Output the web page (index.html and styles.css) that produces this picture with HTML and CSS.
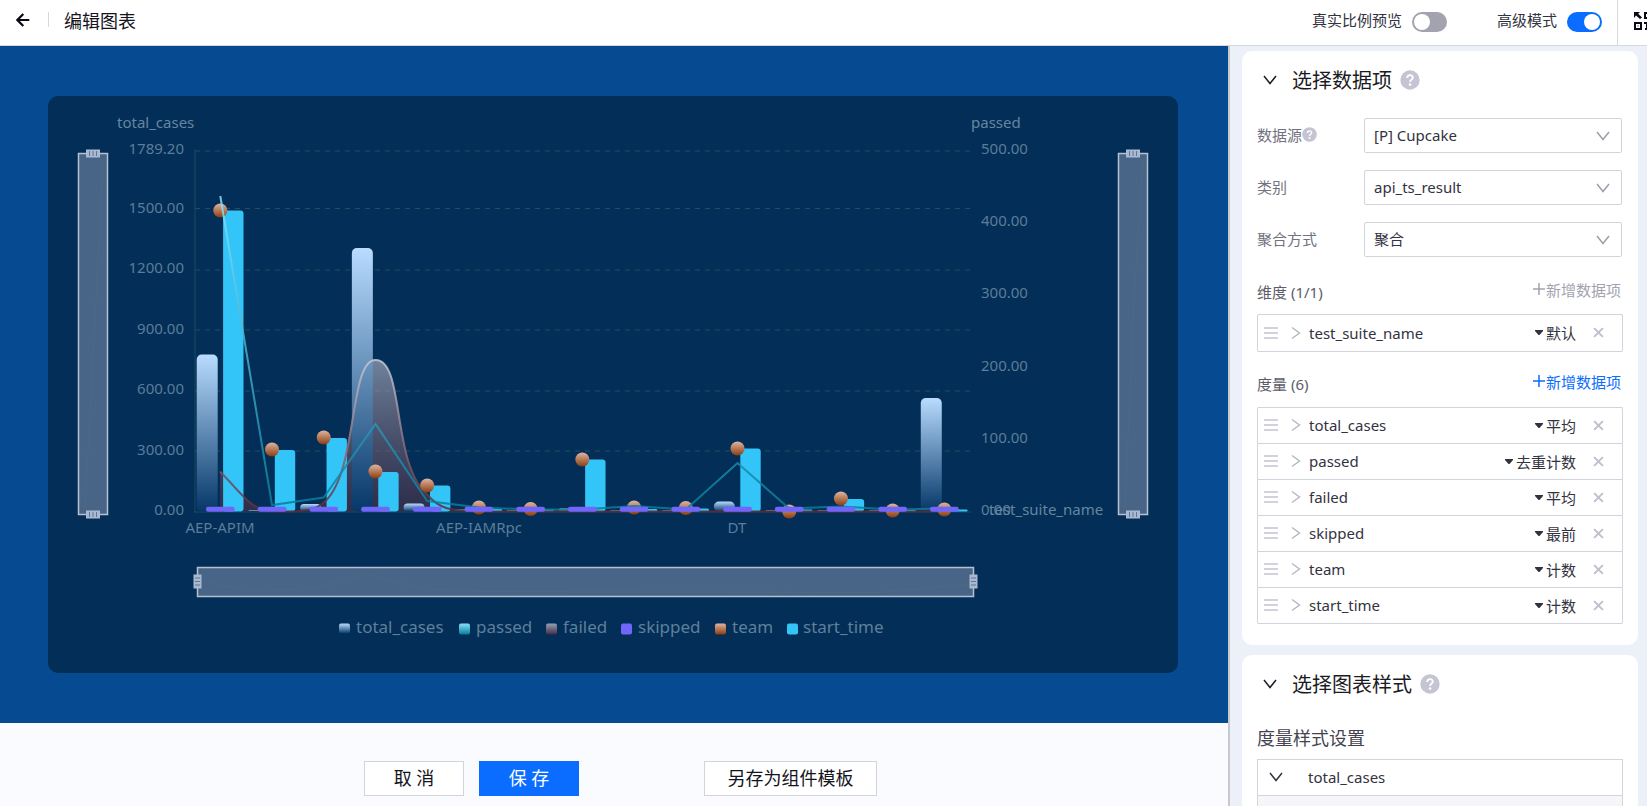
FILE: index.html
```html
<!DOCTYPE html>
<html lang="zh-CN">
<head>
<meta charset="utf-8">
<title>编辑图表</title>
<link rel="stylesheet" href="styles.css">
</head>
<body>
<svg class="defs" aria-hidden="true">
  <symbol id="i-down" viewBox="0 0 14 10"><path d="M1 1l6 7.500 6-7.500" fill="none" stroke="currentColor" stroke-width="1.500"/></symbol>
  <symbol id="i-right" viewBox="0 0 10 14"><path d="M1 1.500l7.500 5.500L1 12.500" fill="none" stroke="currentColor" stroke-width="1.400"/></symbol>
  <symbol id="i-drag" viewBox="0 0 14 12"><path d="M0 1h14M0 6h14M0 11h14" stroke="currentColor" stroke-width="1.500"/></symbol>
  <symbol id="i-close" viewBox="0 0 10 10"><path d="M1 1l8 8M9 1l-8 8" stroke="currentColor" stroke-width="1.800"/></symbol>
  <symbol id="i-caret" viewBox="0 0 8 5"><path d="M0 0h8v1L4.500 5h-1L0 1z" fill="currentColor"/></symbol>
  <symbol id="i-plus" viewBox="0 0 12 12"><path d="M6 0v12M0 6h12" stroke="currentColor" stroke-width="1.500"/></symbol>
  <symbol id="i-help" viewBox="0 0 20 20"><circle cx="10" cy="10" r="9.700" fill="#c4c4d2"/><path d="M7.200 8c0-3.800 5.600-3.700 5.600-.4 0 2-2.700 2.100-2.700 4.300" fill="none" stroke="#fff" stroke-width="1.900"/><circle cx="10.100" cy="14.600" r="1.300" fill="#fff"/></symbol>
</svg>

<header class="topbar">
  <button class="back" aria-label="返回"><svg width="14" height="14" viewBox="0 0 14 14"><path d="M7.300.9L1.400 7l5.900 6.100M1.600 7H13.300" fill="none" stroke="#0a0a14" stroke-width="2.200"/></svg></button>
  <h1>编辑图表</h1>
  <div class="switches">
    <label class="switch">真实比例预览<input type="checkbox" role="switch"></label>
    <label class="switch">高级模式<input type="checkbox" role="switch" checked></label>
  </div>
  <button class="qr" aria-label="二维码"><svg width="18" height="18" viewBox="0 0 18 18" fill="none" stroke="#0a0a14" stroke-width="2"><path d="M0 0h6L4.200 1.800 8 5.600 6 7 2 3.600 0 6z" fill="#0a0a14" stroke="none"/><path d="M11 1h6v5h-6zM1 11h6v6H1z"/><path d="M3.500 13.500h1v1h-1z" stroke="none" fill="#0a0a14"/><path d="M10 11h3v4h4M11 17h3"/></svg></button>
</header>

<div class="body">
  <main class="editor">
    <div class="stage">
      <div class="chart-card">
        <svg class="chart" viewBox="48 96 1130 576" role="img" aria-label="total_cases chart">
          <defs>
            <linearGradient id="gBar" x1="0" y1="0" x2="0" y2="1"><stop offset="0" stop-color="#b9dcff"/><stop offset="1" stop-color="#053768"/></linearGradient>
            <linearGradient id="gLine" gradientUnits="userSpaceOnUse" x1="0" y1="195" x2="0" y2="510"><stop offset="0" stop-color="#86e2fb"/><stop offset="1" stop-color="#067c9b"/></linearGradient>
            <linearGradient id="gFail" gradientUnits="userSpaceOnUse" x1="0" y1="359" x2="0" y2="511"><stop offset="0" stop-color="#c4c9d8"/><stop offset="1" stop-color="#5c2a38"/></linearGradient>
            <linearGradient id="gArea" gradientUnits="userSpaceOnUse" x1="0" y1="359" x2="0" y2="511"><stop offset="0" stop-color="#b8bccb" stop-opacity=".6"/><stop offset="1" stop-color="#6a2e3b" stop-opacity=".4"/></linearGradient>
            <linearGradient id="gDot" x1="0" y1="0" x2="0" y2="1"><stop offset="0" stop-color="#dfb5a0"/><stop offset="1" stop-color="#8c3d10"/></linearGradient>
            <linearGradient id="gTeal" x1="0" y1="0" x2="0" y2="1"><stop offset="0" stop-color="#86e2fb"/><stop offset="1" stop-color="#067c9b"/></linearGradient>
            <linearGradient id="gMauve" x1="0" y1="0" x2="0" y2="1"><stop offset="0" stop-color="#9a9fb4"/><stop offset="1" stop-color="#402c45"/></linearGradient>
            <g id="grip"><rect x="-7" y="-4" width="14" height="8" fill="#a9b9d0"/><path d="M-3.500-2.500v5M0-2.500v5M3.500-2.500v5" stroke="#5c7699"/></g>
          </defs>
          <path class="grid" d="M195 150.500h775M195 208h775M195 269.500h775M195 329.500h775M195 390.500h775M195 450.500h775"/>
          <path class="axis" d="M195 149v363M194 511.500h777"/>
          <g class="tick end">
            <text x="184" y="153">1789.20</text><text x="184" y="212">1500.00</text><text x="184" y="272">1200.00</text><text x="184" y="333">900.00</text><text x="184" y="393">600.00</text><text x="184" y="454">300.00</text><text x="184" y="514">0.00</text>
          </g>
          <g class="tick">
            <text x="981" y="153">500.00</text><text x="981" y="225">400.00</text><text x="981" y="297">300.00</text><text x="981" y="370">200.00</text><text x="981" y="442">100.00</text><text x="981" y="514">0.00</text>
          </g>
          <g class="name"><text x="117" y="127">total_cases</text><text x="971" y="127">passed</text><text x="989" y="514">test_suite_name</text></g>
          <g class="tick mid"><text x="220" y="532">AEP-APIM</text><text x="479" y="532">AEP-IAMRpc</text><text x="737" y="532">DT</text></g>
          <path fill="url(#gArea)" d="M220 471C240 491 252 511 272 511C300 511 315 512 326 500C358 468 349 359.500 375.500 359.500C405 359.500 391 462 427 494C440 509 450 510 479 511H220Z"/>
          <g fill="url(#gBar)" id="bars"></g>
          <g fill="#33c4f8" id="cyan"></g>
          <path class="fail" d="M220 471C240 491 252 511 272 511C300 511 315 512 326 500C358 468 349 359.500 375.500 359.500C405 359.500 391 462 427 494C440 509 450 510 479 511H945"/>
          <g fill="url(#gDot)" id="dots"></g>
          <polyline class="pass" points="220.300,195.500 272,504.500 323.700,497 375.500,423.500 427.200,500.500 479,507 530.600,509 582.300,509 634,505.500 685.800,509 737.500,462.500 789.200,508 841,506 892.700,509 944.400,508"/>
          <g fill="#7166fa" id="dashes"></g>
          <g class="slider">
            <rect x="78.500" y="153" width="29" height="361"/><rect x="1118.500" y="153" width="29" height="361"/><rect x="197.500" y="567" width="776" height="29"/>
          </g>
          <g class="shadow-line"><path d="M103 158L96 300 85 508M1143 158L1134 300 1125 508M198 580L248 590 315 588 366 573 420 588 480 591 880 592 973 583"/></g>
          <use href="#grip" x="93" y="153"/><use href="#grip" x="93" y="514"/><use href="#grip" x="1133" y="153"/><use href="#grip" x="1133" y="514"/>
          <use href="#grip" transform="translate(197.500 581) rotate(90)"/><use href="#grip" transform="translate(973.500 581) rotate(90)"/>
          <g class="keys">
            <rect x="339" y="623" width="11" height="10" rx="2" fill="url(#gBar)"/><rect x="459" y="623" width="11" height="11" rx="2" fill="url(#gTeal)"/><rect x="546" y="623" width="11" height="11" rx="2" fill="url(#gMauve)"/><rect x="621" y="623" width="11" height="11" rx="2" fill="#7166fa"/><rect x="715" y="623" width="11" height="11" rx="2" fill="url(#gDot)"/><rect x="787" y="623" width="11" height="11" rx="2" fill="#33c4f8"/>
            <text x="356" y="632">total_cases</text><text x="476" y="632">passed</text><text x="563" y="632">failed</text><text x="638" y="632">skipped</text><text x="732" y="632">team</text><text x="803" y="632">start_time</text>
          </g>
        </svg>
      </div>
    </div>
    <footer class="actions">
      <button class="btn">取 消</button>
      <button class="btn primary">保 存</button>
      <button class="btn wide">另存为组件模板</button>
    </footer>
  </main>

  <aside class="panel">
    <section class="card">
      <h2><svg class="fold"><use href="#i-down"/></svg>选择数据项<svg class="help"><use href="#i-help"/></svg></h2>
      <div class="field"><label for="src">数据源<svg class="help small"><use href="#i-help"/></svg></label><div class="select"><select id="src"><option>[P] Cupcake</option></select><svg><use href="#i-down"/></svg></div></div>
      <div class="field"><label for="cat">类别</label><div class="select"><select id="cat"><option>api_ts_result</option></select><svg><use href="#i-down"/></svg></div></div>
      <div class="field"><label for="agg">聚合方式</label><div class="select"><select id="agg"><option>聚合</option></select><svg><use href="#i-down"/></svg></div></div>

      <div class="group"><h3>维度 (1/1)</h3><button class="add" disabled><svg><use href="#i-plus"/></svg>新增数据项</button></div>
      <ul class="list single">
        <li><svg class="drag"><use href="#i-drag"/></svg><svg class="open"><use href="#i-right"/></svg><span>test_suite_name</span><button class="mode"><svg><use href="#i-caret"/></svg>默认</button><button class="close" aria-label="删除"><svg><use href="#i-close"/></svg></button></li>
      </ul>
      <div class="group second"><h3>度量 (6)</h3><button class="add"><svg><use href="#i-plus"/></svg>新增数据项</button></div>
      <ul class="list">
        <li><svg class="drag"><use href="#i-drag"/></svg><svg class="open"><use href="#i-right"/></svg><span>total_cases</span><button class="mode"><svg><use href="#i-caret"/></svg>平均</button><button class="close" aria-label="删除"><svg><use href="#i-close"/></svg></button></li>
        <li><svg class="drag"><use href="#i-drag"/></svg><svg class="open"><use href="#i-right"/></svg><span>passed</span><button class="mode"><svg><use href="#i-caret"/></svg>去重计数</button><button class="close" aria-label="删除"><svg><use href="#i-close"/></svg></button></li>
        <li><svg class="drag"><use href="#i-drag"/></svg><svg class="open"><use href="#i-right"/></svg><span>failed</span><button class="mode"><svg><use href="#i-caret"/></svg>平均</button><button class="close" aria-label="删除"><svg><use href="#i-close"/></svg></button></li>
        <li><svg class="drag"><use href="#i-drag"/></svg><svg class="open"><use href="#i-right"/></svg><span>skipped</span><button class="mode"><svg><use href="#i-caret"/></svg>最前</button><button class="close" aria-label="删除"><svg><use href="#i-close"/></svg></button></li>
        <li><svg class="drag"><use href="#i-drag"/></svg><svg class="open"><use href="#i-right"/></svg><span>team</span><button class="mode"><svg><use href="#i-caret"/></svg>计数</button><button class="close" aria-label="删除"><svg><use href="#i-close"/></svg></button></li>
        <li><svg class="drag"><use href="#i-drag"/></svg><svg class="open"><use href="#i-right"/></svg><span>start_time</span><button class="mode"><svg><use href="#i-caret"/></svg>计数</button><button class="close" aria-label="删除"><svg><use href="#i-close"/></svg></button></li>
      </ul>
    </section>
    <section class="card">
      <h2><svg class="fold"><use href="#i-down"/></svg>选择图表样式<svg class="help"><use href="#i-help"/></svg></h2>
      <h4>度量样式设置</h4>
      <div class="style-box"><button><svg class="fold"><use href="#i-down"/></svg>total_cases</button><div class="style-body"></div></div>
    </section>
  </aside>
</div>
<script src="chart.js"></script>
</body>
</html>
```
FILE: styles.css
```css
* { box-sizing: border-box; }
body { margin: 0; height: 100vh; display: flex; flex-direction: column; overflow: hidden; font-family: "Noto Sans", "Noto Sans CJK SC", sans-serif; font-size: 15px; color: #33333f; background: #fff; }
h1, h2, h3, h4, ul { margin: 0; padding: 0; font-weight: 400; list-style: none; }
button, select { font: inherit; color: inherit; background: none; border: 0; padding: 0; }
svg { display: block; flex: none; }
.defs { position: absolute; width: 0; height: 0; }

.topbar { flex: none; height: 46px; display: flex; align-items: center; border-bottom: 1px solid #d7d7de; padding-bottom: 6px; }
.back { width: 49px; height: 15px; padding-left: 16px; border-right: 1px solid #d7d7e2; }
.topbar h1 { font-size: 18px; color: #14141c; margin-left: 15px; }
.switches { margin-left: auto; display: flex; gap: 50px; padding-right: 15px; }
.switch { display: flex; align-items: center; gap: 10px; }
.switch input { appearance: none; margin: 4px 0 0; width: 35px; height: 20px; border-radius: 10px; background: #a3a3b0; display: flex; padding: 2px; }
.switch input::before { content: ""; width: 16px; height: 16px; border-radius: 50%; background: #fff; }
.switch input:checked { background: #0a6dff; justify-content: flex-end; }
.qr { align-self: stretch; margin-bottom: -6px; width: 30px; padding: 0 0 3px 16px; border-left: 1px solid #d7d7de; overflow: hidden; }

.body { flex: 1; min-height: 0; display: flex; }
.editor { flex: 1; min-width: 0; display: flex; flex-direction: column; background: #fafbff; }
.stage { flex: 1; min-height: 0; background: #064b91; padding: 50px 50px 50px 48px; }
.chart-card { height: 100%; border-radius: 10px; background: #032e57; }
.chart { width: 100%; height: 100%; }
.actions { flex: none; height: 83px; display: flex; gap: 15px; padding: 38px 0 0 364px; }
.btn { width: 100px; height: 35px; font-size: 18px; line-height: 33px; background: #fff; border: 1px solid #d3d3de; color: #14141c; white-space: nowrap; }
.btn.primary { background: #0a6dff; border-color: #0a6dff; color: #fff; }
.btn.wide { width: 173px; margin-left: 110px; }

.grid { stroke: #1f5063; stroke-dasharray: 5 5; fill: none; }
.axis { stroke: #1a4a60; fill: none; }
.tick { font-size: 15px; fill: #5a7d99; }
.end { text-anchor: end; }
.mid { text-anchor: middle; }
.name { font-size: 15px; fill: #6387a0; }
.keys { font-size: 17px; fill: #5d809b; }
.fail { fill: none; stroke: url(#gFail); stroke-width: 2; stroke-opacity: .85; }
.pass { fill: none; stroke: url(#gLine); stroke-width: 2; stroke-opacity: .85; }
.slider rect { fill: #486587; stroke: #b4c1d1; stroke-width: 1.5; }
.shadow-line { fill: none; stroke: #4b6a83; }

.panel { flex: none; width: 419px; border-left: 2px solid #c8c8cd; background: #ecf0f8; padding: 5px 9px 0 12px; display: flex; flex-direction: column; gap: 10px; overflow: hidden; }
.card { flex: none; background: #fff; border-radius: 10px; padding: 15px 15px 21px; }
.card h2 { display: flex; align-items: center; height: 27px; font-size: 20px; color: #1b1b24; padding-left: 6px; }
.fold { width: 14px; height: 10px; }
h2 .fold { margin-right: 15px; }
.help { width: 20px; height: 20px; margin-left: 8px; }
.help.small { width: 15px; height: 15px; margin: 0; }
.field { display: flex; align-items: center; margin-bottom: 17px; color: #72727f; }
.card h2 + .field { margin-top: 25px; }
.field label { width: 107px; display: flex; align-items: center; padding-bottom: 2px; }
.select { flex: 1; display: flex; align-items: center; height: 35px; border: 1px solid #d3d3de; border-radius: 2px; margin-right: 1px; color: #9d9dab; padding-right: 11px; }
.select select { appearance: none; flex: 1; height: 100%; padding: 0 0 2px 9px; color: #33333f; }
.select svg { width: 14px; height: 10px; }
.group { display: flex; justify-content: space-between; height: 22px; margin: 21px 2px 14px 0; }
.group.second { margin: 18px 2px 15px 0; }
.group h3 { font-size: 15px; line-height: 28px; color: #5d5d6a; }
.add { display: flex; align-items: center; gap: 1px; color: #0a6dff; }
.add:disabled { color: #a3a3b0; }
.add svg { width: 12px; height: 12px; }
.list { border: 1px solid #d3d3de; border-bottom: 0; border-radius: 2px; }
.list li { height: 36px; display: flex; align-items: center; padding: 0 18px 1px 6px; border-bottom: 1px solid #d3d3de; }
.list li > span { flex: 1; margin-left: 8px; }
.list.single li { height: 37px; }
.drag { width: 14px; height: 12px; color: #c4c4d2; }
.open { width: 10px; height: 14px; margin-left: 13px; color: #b5b5c5; }
.mode { display: flex; align-items: center; gap: 3px; margin-right: 17px; }
.mode svg { width: 8px; height: 5px; }
.close svg { width: 11px; height: 11px; color: #bfbfce; }
.card h4 { font-size: 18px; line-height: 28px; margin: 27px 0 7px; color: #44444f; }
.style-box { border: 1px solid #d3d3de; }
.style-box button { width: 100%; height: 36px; display: flex; align-items: center; gap: 25px; padding: 0 0 1px 11px; border-bottom: 1px solid #d3d3de; }
.style-body { height: 120px; background: #f5f5fa; }
```
FILE: chart.js
```js
const NS = 'http://www.w3.org/2000/svg';
const BASE = 511;
const cx = i => 220.3 + i * 51.72;
function add(parent, tag, attrs) {
  const el = document.createElementNS(NS, tag);
  for (const k in attrs) el.setAttribute(k, attrs[k]);
  document.getElementById(parent).appendChild(el);
}
const total = [354, 510, 503.5, 247.5, 503, 509, 510, 508, 510, 510, 501, 510, 510, 510, 397.5];
const start = [210, 449.5, 437.5, 471.5, 485, 508.5, 509, 459, 508.5, 508, 448, 509, 498.5, 509.5, 509];
const team = [210, 449, 437, 471, 485, 507, 508.5, 459, 507, 507.5, 448, 511, 498, 510, 509];
total.forEach((y, i) => add('bars', 'rect', { x: cx(i) - 23.6, y, width: 21, height: BASE - y, rx: Math.min(5, (BASE - y) / 2) }));
start.forEach((y, i) => add('cyan', 'rect', { x: cx(i) + 2.8, y, width: 20.4, height: BASE - y, rx: Math.min(3, (BASE - y) / 2) }));
team.forEach((y, i) => add('dots', 'circle', { cx: cx(i), cy: y, r: 7 }));
team.forEach((y, i) => add('dashes', 'rect', { x: cx(i) - 14.3, y: 506.3, width: 28.6, height: 5, rx: 2 }));
```
